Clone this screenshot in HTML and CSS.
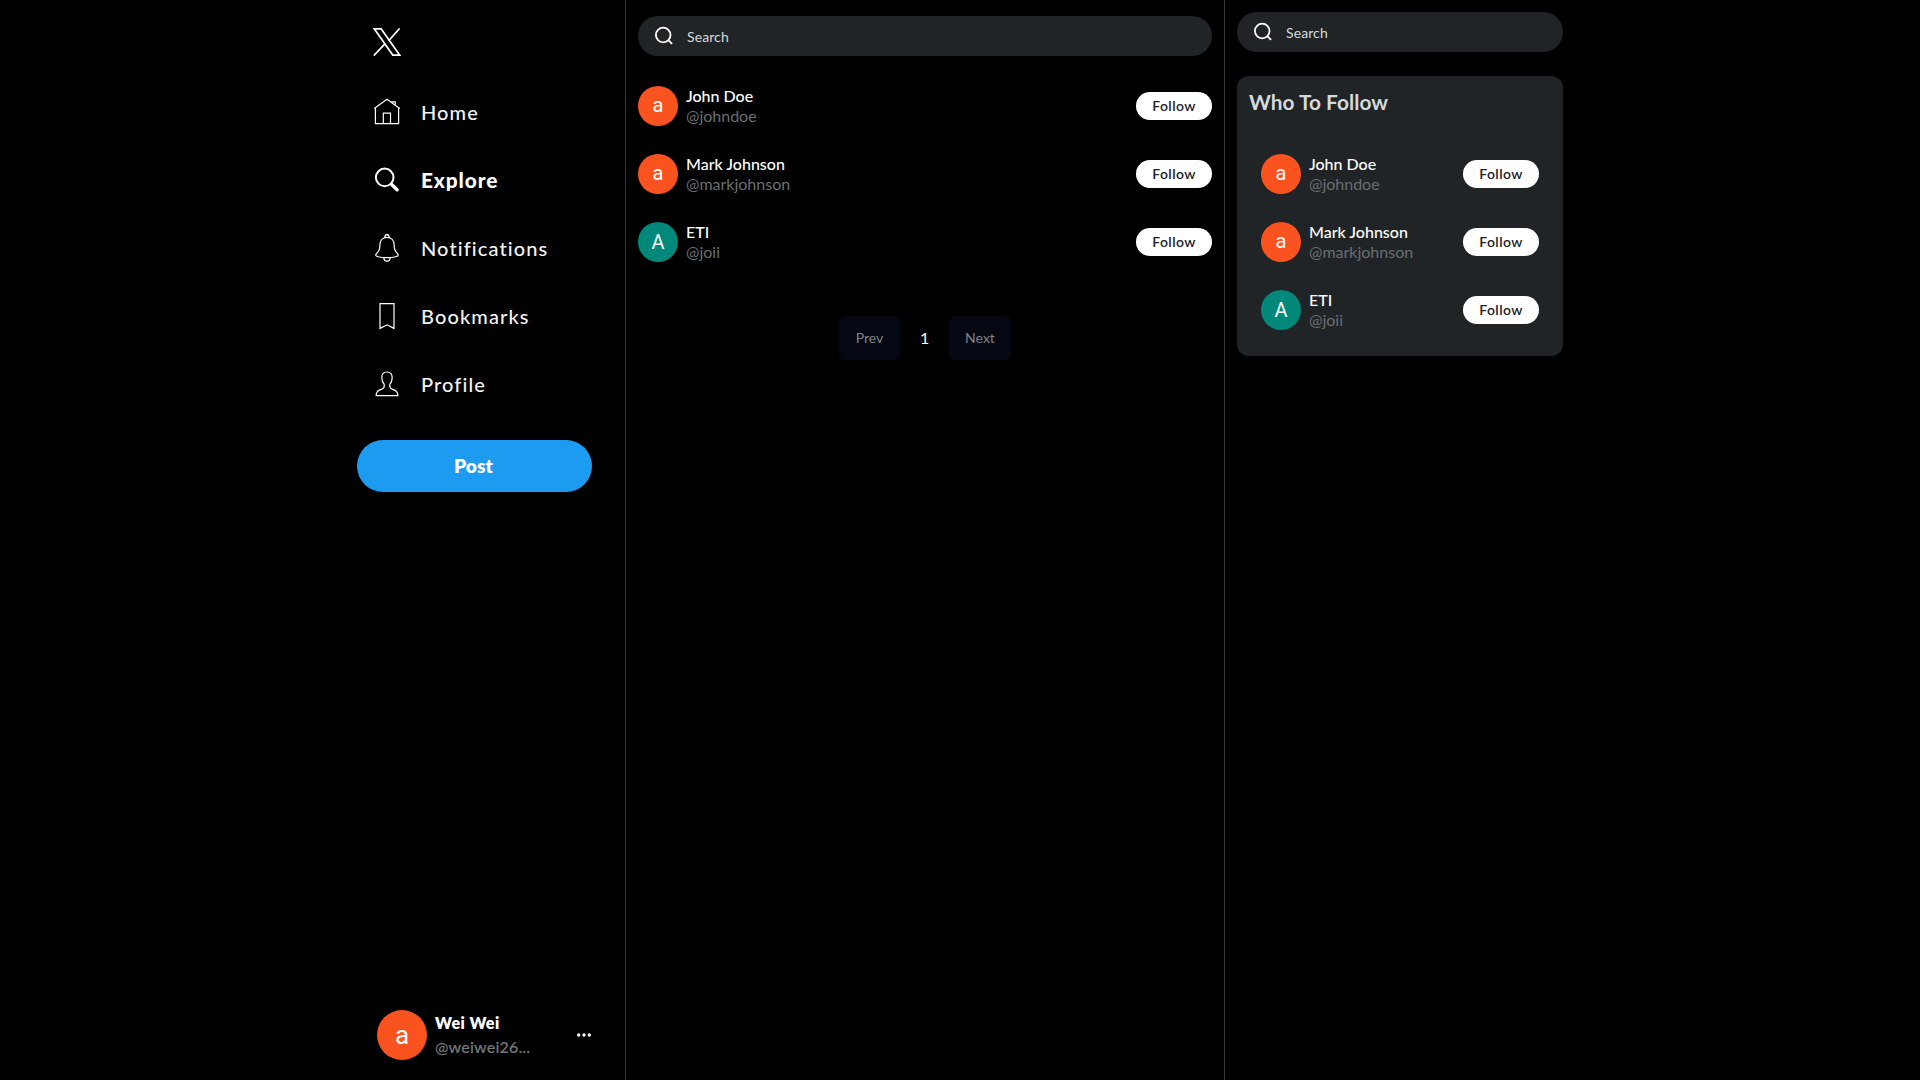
FILE: index.html
```html
<!DOCTYPE html>
<html lang="en">
<head>
<meta charset="utf-8">
<title>Explore</title>
<link rel="stylesheet" href="styles.css">
</head>
<body>
<div class="layout">
  <aside class="sidebar">
    <nav class="nav">
      <a class="logo"><svg width="28" height="28" viewBox="0 0 28 28"><path d="M1.400.9h6.800l18.400 26.200h-6.800zM26.600.4 15.500 13M12.400 15.400.8 27.600"/></svg></a>
      <a class="nav-item"><svg width="28" height="28" viewBox="0 0 28 28"><path d="M1.200 10.600 14 1.300l12.800 9.300M2.400 10v15.700h23.200V10M10.300 25.500V15.200h7.200v10.300M18.800 4.600V3.800h3.500v3.400"/></svg><span>Home</span></a>
      <a class="nav-item active"><svg width="28" height="28" viewBox="0 0 28 28"><circle cx="11.700" cy="11.400" r="8.800"/><path class="handle" d="m18.700 18.500 5.400 5.300"/></svg><span>Explore</span></a>
      <a class="nav-item"><svg width="28" height="28" viewBox="0 0 28 28"><path d="M11.800 3.700C11.900-.5 16.100-.5 16.200 3.700M14 3.300C9.200 3.300 6.900 6.900 6.900 11c0 5.200-1.200 6.700-3.300 8.500-2.200 1.900-.8 4.100 10.400 4.100s12.600-2.200 10.400-4.100c-2.100-1.800-3.300-3.300-3.300-8.500 0-4.100-2.300-7.700-7.100-7.700zM10.700 23.600C10.900 28.400 17.100 28.400 17.300 23.600"/></svg><span>Notifications</span></a>
      <a class="nav-item"><svg width="28" height="28" viewBox="0 0 28 28"><path d="M7 1.700h14v24.700l-7-3.600-7 3.600z"/></svg><span>Bookmarks</span></a>
      <a class="nav-item"><svg width="28" height="28" viewBox="0 0 28 28"><path d="M14 2c-3.400 0-5.200 2.400-5.200 5.700 0 2.900.8 4.800 2.400 6.700.3 2.600.1 3.700-1.500 4.400-3.300 1.400-6.600 1.700-6.500 6.800h21.600c.1-5.100-3.200-5.400-6.500-6.800-1.600-.7-1.800-1.800-1.500-4.400 1.600-1.900 2.400-3.800 2.400-6.700C19.200 4.400 17.400 2 14 2z"/></svg><span>Profile</span></a>
    </nav>
    <button class="post">Post</button>
    <div class="account">
      <div class="avatar large">a</div>
      <div class="account-text"><div class="account-name">Wei Wei</div><div class="account-handle">@weiwei26...</div></div>
      <svg class="dots" width="16" height="16" viewBox="0 0 16 16"><circle cx="2.700" cy="8" r="1.700"/><circle cx="8" cy="8" r="1.700"/><circle cx="13.300" cy="8" r="1.700"/></svg>
    </div>
  </aside>
  <main class="feed">
    <div class="search"><svg width="20" height="20" viewBox="0 0 20 20"><circle cx="9.200" cy="9" r="7.300"/><path d="m14.300 14.100 3.800 3.700"/></svg><span>Search</span></div>
    <ul class="people">
      <li class="person"><div class="avatar">a</div><div class="who"><div class="name">John Doe</div><div class="tag">@johndoe</div></div><button class="follow">Follow</button></li>
      <li class="person"><div class="avatar">a</div><div class="who"><div class="name">Mark Johnson</div><div class="tag">@markjohnson</div></div><button class="follow">Follow</button></li>
      <li class="person"><div class="avatar teal">A</div><div class="who"><div class="name">ETI</div><div class="tag">@joii</div></div><button class="follow">Follow</button></li>
    </ul>
    <div class="pager"><button class="page prev">Prev</button><span class="number">1</span><button class="page next">Next</button></div>
  </main>
  <aside class="rail">
    <div class="search"><svg width="20" height="20" viewBox="0 0 20 20"><circle cx="9.200" cy="9" r="7.300"/><path d="m14.300 14.100 3.800 3.700"/></svg><span>Search</span></div>
    <section class="card">
      <h2>Who To Follow</h2>
      <ul class="people">
        <li class="person"><div class="avatar">a</div><div class="who"><div class="name">John Doe</div><div class="tag">@johndoe</div></div><button class="follow">Follow</button></li>
        <li class="person"><div class="avatar">a</div><div class="who"><div class="name">Mark Johnson</div><div class="tag">@markjohnson</div></div><button class="follow">Follow</button></li>
        <li class="person"><div class="avatar teal">A</div><div class="who"><div class="name">ETI</div><div class="tag">@joii</div></div><button class="follow">Follow</button></li>
      </ul>
    </section>
  </aside>
</div>
</body>
</html>
```
FILE: styles.css
```css
* { box-sizing: border-box; margin: 0; padding: 0; }
body { background: #000; color: #fff; font-family: Lato, sans-serif; font-size: 16px; line-height: 20px; }
button { border: 0; font-family: inherit; }
svg { display: block; flex: none; fill: none; stroke: #fff; }
.layout { display: grid; grid-template-columns: 280px 600px 349px; height: 1080px; margin-left: 345px; width: 1229px; }

.sidebar { display: flex; flex-direction: column; padding: 8px 0 20px 12px; }
.nav { display: flex; flex-direction: column; }
.logo { height: 70px; padding: 20px 0 0 16px; }
.logo svg { stroke-width: 1.7; }
.nav-item { display: flex; align-items: center; gap: 20px; height: 68px; padding-left: 16px; font-size: 20px; font-weight: 500; letter-spacing: 1.1px; color: #f3f3f3; }
.nav-item svg { stroke-width: 1.2; }
.nav-item.active { font-size: 20.8px; font-weight: 900; letter-spacing: .9px; color: #fff; }
.nav-item.active svg { stroke-width: 2; }
.nav-item.active .handle { stroke-width: 3.4; stroke-linecap: round; }
.post { width: 235px; height: 52px; margin-top: 22px; padding: 0 2px 1px 0; border-radius: 26px; background: #1d9bf0; color: #fff; font-size: 19.2px; font-weight: 800; }
.account { display: flex; align-items: center; margin-top: auto; padding-left: 20px; }
.account-text { width: 141px; margin-left: 8px; line-height: 24px; }
.account-name { font-weight: 800; letter-spacing: .45px; }
.account-handle { font-weight: 600; letter-spacing: .15px; color: #71767b; }
.dots { fill: #fff; stroke: none; }

.avatar { display: flex; align-items: center; justify-content: center; flex: none; width: 40px; height: 40px; padding-bottom: 2px; border-radius: 50%; background: #fa5320; color: #fff; font-family: Roboto, sans-serif; font-size: 20px; }
.avatar.teal { padding-bottom: 0; background: #00897b; }
.avatar.large { width: 50px; height: 50px; padding-bottom: 1px; font-size: 26px; }

.feed { padding: 16px 12px 0; border: 1px solid #333639; border-width: 0 1px; }
.search { display: flex; align-items: center; gap: 13px; height: 40px; padding-left: 16px; border-radius: 20px; background: #202426; color: #d6d9db; font-size: 14px; }
.search svg { stroke-width: 1.8; }
.search span { padding-top: 2px; letter-spacing: .1px; }
.people { display: flex; flex-direction: column; gap: 28px; margin-top: 30px; list-style: none; }
.person { display: flex; align-items: center; gap: 8px; }
.who { flex: 1; }
.name { font-weight: 500; }
.tag { color: #6a6e70; }
.follow { width: 76px; height: 28px; padding-bottom: 2px; border-radius: 14px; background: #fff; color: #202327; font-size: 14px; font-weight: 600; letter-spacing: .4px; }
.pager { display: flex; align-items: center; justify-content: center; gap: 20px; margin-top: 54px; }
.page { height: 44px; padding-bottom: 2px; border-radius: 6px; background: #050812; color: #808286; font-size: 14px; }
.prev { width: 61px; }
.next { width: 62px; }
.number { width: 9px; text-align: center; }

.rail { padding: 12px 11px 0 12px; }
.card { height: 280px; margin-top: 24px; padding: 12px 12px 0; border-radius: 12px; background: #202426; }
.card h2 { color: #d6d9db; font-size: 20.8px; font-weight: 700; letter-spacing: .05px; line-height: 28px; }
.card .people { margin-top: 38px; padding: 0 12px; }
```
